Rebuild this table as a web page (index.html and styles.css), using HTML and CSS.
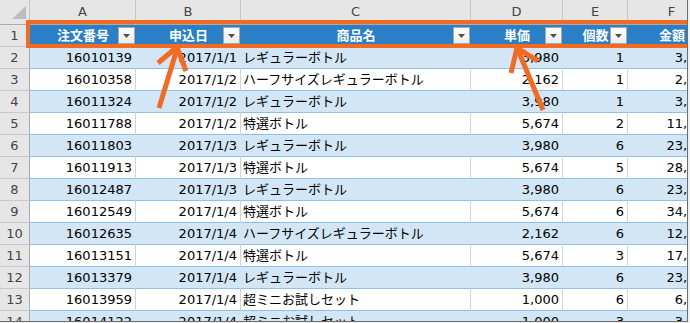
FILE: index.html
```html
<!DOCTYPE html>
<html lang="ja">
<head>
<meta charset="utf-8">
<title>Excel table</title>
<link rel="stylesheet" href="styles.css">
</head>
<body>
<div class="frame">
  <div class="sheet">
    <div class="row colheads">
      <div class="corner"><svg width="29" height="24" viewBox="0 0 29 24"><polygon points="12,19 26,19 26,6" fill="#bdbdbd"/></svg></div>
      <div class="ch">A</div><div class="ch">B</div><div class="ch">C</div><div class="ch">D</div><div class="ch">E</div><div class="ch">F</div>
    </div>
    <div class="row hdr">
      <div class="rh">1</div>
      <div class="hc"><span>注文番号</span><i class="fb"><svg width="7" height="4" viewBox="0 0 7 4"><polygon points="0,0 7,0 3.5,4" fill="#505050"/></svg></i></div>
      <div class="hc"><span>申込日</span><i class="fb"><svg width="7" height="4" viewBox="0 0 7 4"><polygon points="0,0 7,0 3.5,4" fill="#505050"/></svg></i></div>
      <div class="hc"><span>商品名</span><i class="fb"><svg width="7" height="4" viewBox="0 0 7 4"><polygon points="0,0 7,0 3.5,4" fill="#505050"/></svg></i></div>
      <div class="hc"><span>単価</span><i class="fb"><svg width="7" height="4" viewBox="0 0 7 4"><polygon points="0,0 7,0 3.5,4" fill="#505050"/></svg></i></div>
      <div class="hc"><span>個数</span><i class="fb"><svg width="7" height="4" viewBox="0 0 7 4"><polygon points="0,0 7,0 3.5,4" fill="#505050"/></svg></i></div>
      <div class="hc"><span>金額</span><i class="fb"><svg width="7" height="4" viewBox="0 0 7 4"><polygon points="0,0 7,0 3.5,4" fill="#505050"/></svg></i></div>
    </div>
    <div class="row band"><div class="rh">2</div><div class="c n">16010139</div><div class="c n">2017/1/1</div><div class="c t">レギュラーボトル</div><div class="c n">3,980</div><div class="c n">1</div><div class="c n">3,980</div></div>
    <div class="row plain"><div class="rh">3</div><div class="c n">16010358</div><div class="c n">2017/1/2</div><div class="c t">ハーフサイズレギュラーボトル</div><div class="c n">2,162</div><div class="c n">1</div><div class="c n">2,162</div></div>
    <div class="row band"><div class="rh">4</div><div class="c n">16011324</div><div class="c n">2017/1/2</div><div class="c t">レギュラーボトル</div><div class="c n">3,980</div><div class="c n">1</div><div class="c n">3,980</div></div>
    <div class="row plain"><div class="rh">5</div><div class="c n">16011788</div><div class="c n">2017/1/2</div><div class="c t">特選ボトル</div><div class="c n">5,674</div><div class="c n">2</div><div class="c n">11,348</div></div>
    <div class="row band"><div class="rh">6</div><div class="c n">16011803</div><div class="c n">2017/1/3</div><div class="c t">レギュラーボトル</div><div class="c n">3,980</div><div class="c n">6</div><div class="c n">23,880</div></div>
    <div class="row plain"><div class="rh">7</div><div class="c n">16011913</div><div class="c n">2017/1/3</div><div class="c t">特選ボトル</div><div class="c n">5,674</div><div class="c n">5</div><div class="c n">28,370</div></div>
    <div class="row band"><div class="rh">8</div><div class="c n">16012487</div><div class="c n">2017/1/3</div><div class="c t">レギュラーボトル</div><div class="c n">3,980</div><div class="c n">6</div><div class="c n">23,880</div></div>
    <div class="row plain"><div class="rh">9</div><div class="c n">16012549</div><div class="c n">2017/1/4</div><div class="c t">特選ボトル</div><div class="c n">5,674</div><div class="c n">6</div><div class="c n">34,044</div></div>
    <div class="row band"><div class="rh">10</div><div class="c n">16012635</div><div class="c n">2017/1/4</div><div class="c t">ハーフサイズレギュラーボトル</div><div class="c n">2,162</div><div class="c n">6</div><div class="c n">12,972</div></div>
    <div class="row plain"><div class="rh">11</div><div class="c n">16013151</div><div class="c n">2017/1/4</div><div class="c t">特選ボトル</div><div class="c n">5,674</div><div class="c n">3</div><div class="c n">17,022</div></div>
    <div class="row band"><div class="rh">12</div><div class="c n">16013379</div><div class="c n">2017/1/4</div><div class="c t">レギュラーボトル</div><div class="c n">3,980</div><div class="c n">6</div><div class="c n">23,880</div></div>
    <div class="row plain"><div class="rh">13</div><div class="c n">16013959</div><div class="c n">2017/1/4</div><div class="c t">超ミニお試しセット</div><div class="c n">1,000</div><div class="c n">6</div><div class="c n">6,000</div></div>
    <div class="row band"><div class="rh">14</div><div class="c n">16014122</div><div class="c n">2017/1/4</div><div class="c t">超ミニお試しセット</div><div class="c n">1,000</div><div class="c n">3</div><div class="c n">3,000</div></div>
  </div>
  <div class="highlight"></div>
  <svg class="arrows" width="688" height="322" viewBox="0 0 688 322">
    <g stroke="#f26b21" stroke-width="5" fill="none" stroke-linejoin="miter" stroke-miterlimit="10">
      <line x1="159" y1="108" x2="177" y2="49"/>
      <polyline points="158,63 177,47 186,71"/>
      <line x1="543" y1="110" x2="518" y2="50"/>
      <polyline points="511,73 517,48 538,61"/>
    </g>
  </svg>
</div>
</body>
</html>
```
FILE: styles.css
```css
html, body {
  margin: 0;
  padding: 0;
  background: #f0f0f0;
}
.frame {
  position: relative;
  width: 687px;
  height: 321px;
  border-right: 1px solid #6e6e6e;
  border-bottom: 1px solid #6e6e6e;
  overflow: hidden;
  background: #ffffff;
}
.sheet {
  width: 720px;
  font-family: "DejaVu Sans", "Noto Sans CJK JP", sans-serif;
  font-size: 13px;
  color: #000;
}
.row {
  display: grid;
  grid-template-columns: 30px 106px 105px 230px 92px 65px 88px;
  height: 22px;
  box-sizing: border-box;
}
.row > div {
  box-sizing: border-box;
  height: 22px;
  line-height: 21px;
  white-space: nowrap;
  overflow: hidden;
}
.colheads {
  height: 25px;
}
.colheads > div {
  height: 25px;
  line-height: 24px;
  background: #e6e6e6;
  border-right: 1px solid #c6c6c6;
  border-bottom: 1px solid #ababab;
  color: #444;
  text-align: center;
}
.corner svg { display: block; }
.rh {
  background: #e6e6e6;
  border-right: 1px solid #ababab;
  border-bottom: 1px solid #c9c9c9;
  color: #444;
  text-align: center;
}
.hdr > .hc {
  display: grid;
  background: #2a7fc6;
  color: #fff;
  font-weight: bold;
  border-bottom: 1px solid #2a7fc6;
}
.hc > span,
.hc > .fb {
  grid-area: 1 / 1;
}
.hc > span {
  justify-self: center;
}
.fb {
  justify-self: end;
  align-self: end;
  width: 17px;
  height: 17px;
  box-sizing: border-box;
  margin: 0 1px 2px 0;
  border: 1px solid #a9a9a9;
  background: linear-gradient(#ffffff, #ececec);
  display: flex;
  align-items: center;
  justify-content: center;
}
.fb svg { display: block; margin-top: 1px; }
.c {
  border-right: 1px solid #d4d4d4;
  border-bottom: 1px solid #8fc0ea;
  padding: 0 3px;
}
.band .c {
  background: #d2e6f6;
  border-right-color: #d2e6f6;
}
.plain .c {
  background: #ffffff;
}
.n { text-align: right; }
.t { text-align: left; padding-left: 2px; }
.highlight {
  position: absolute;
  left: 26px;
  top: 20px;
  width: 700px;
  height: 28px;
  box-sizing: border-box;
  border: 4px solid #f26b21;
}
.arrows {
  position: absolute;
  left: 0;
  top: 0;
}
```
